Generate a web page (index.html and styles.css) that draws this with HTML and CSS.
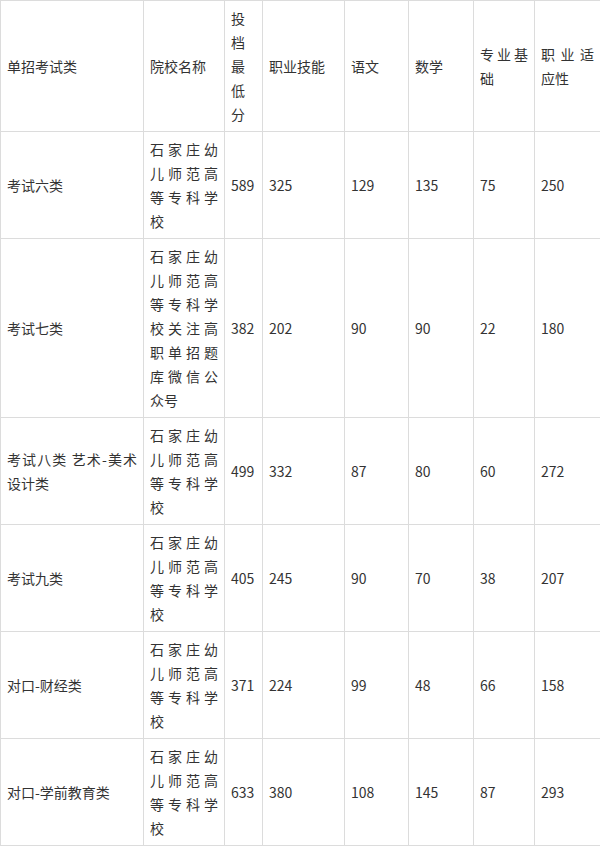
FILE: index.html
```html
<!DOCTYPE html>
<html lang="zh-CN">
<head>
<meta charset="utf-8">
<link rel="stylesheet" href="styles.css">
</head>
<body>
<table class="score-table">
  <colgroup>
    <col class="c1"><col class="c2"><col class="c3"><col class="c4"><col class="c5"><col class="c6"><col class="c7"><col class="c8">
  </colgroup>
  <tbody>
    <tr>
      <td>单招考试类</td>
      <td>院校名称</td>
      <td>投档最低分</td>
      <td>职业技能</td>
      <td>语文</td>
      <td>数学</td>
      <td>专业基础</td>
      <td>职业适应性</td>
    </tr>
    <tr>
      <td>考试六类</td>
      <td>石家庄幼儿师范高等专科学校</td>
      <td>589</td>
      <td>325</td>
      <td>129</td>
      <td>135</td>
      <td>75</td>
      <td>250</td>
    </tr>
    <tr>
      <td>考试七类</td>
      <td>石家庄幼儿师范高等专科学校关注高职单招题库微信公众号</td>
      <td>382</td>
      <td>202</td>
      <td>90</td>
      <td>90</td>
      <td>22</td>
      <td>180</td>
    </tr>
    <tr>
      <td>考试八类 艺术-美术设计类</td>
      <td>石家庄幼儿师范高等专科学校</td>
      <td>499</td>
      <td>332</td>
      <td>87</td>
      <td>80</td>
      <td>60</td>
      <td>272</td>
    </tr>
    <tr>
      <td>考试九类</td>
      <td>石家庄幼儿师范高等专科学校</td>
      <td>405</td>
      <td>245</td>
      <td>90</td>
      <td>70</td>
      <td>38</td>
      <td>207</td>
    </tr>
    <tr>
      <td>对口-财经类</td>
      <td>石家庄幼儿师范高等专科学校</td>
      <td>371</td>
      <td>224</td>
      <td>99</td>
      <td>48</td>
      <td>66</td>
      <td>158</td>
    </tr>
    <tr>
      <td>对口-学前教育类</td>
      <td>石家庄幼儿师范高等专科学校</td>
      <td>633</td>
      <td>380</td>
      <td>108</td>
      <td>145</td>
      <td>87</td>
      <td>293</td>
    </tr>
  </tbody>
</table>
</body>
</html>
```
FILE: styles.css
```css
html, body {
  margin: 0;
  padding: 0;
  background: #fff;
}
.score-table {
  border-collapse: collapse;
  table-layout: fixed;
  width: 600px;
  font-family: "Noto Sans CJK SC", "Noto Sans", sans-serif;
  font-size: 14px;
  line-height: 24px;
  color: #333;
}
.score-table td {
  border: 1px solid #dcdcdc;
  padding: 5px 6px;
  vertical-align: middle;
  text-align: justify;
  word-break: break-all;
}
.c1 { width: 143px; }
.c2 { width: 81px; }
.c3 { width: 38px; }
.c4 { width: 82px; }
.c5 { width: 64px; }
.c6 { width: 65px; }
.c7 { width: 61px; }
.c8 { width: 66px; }
```
